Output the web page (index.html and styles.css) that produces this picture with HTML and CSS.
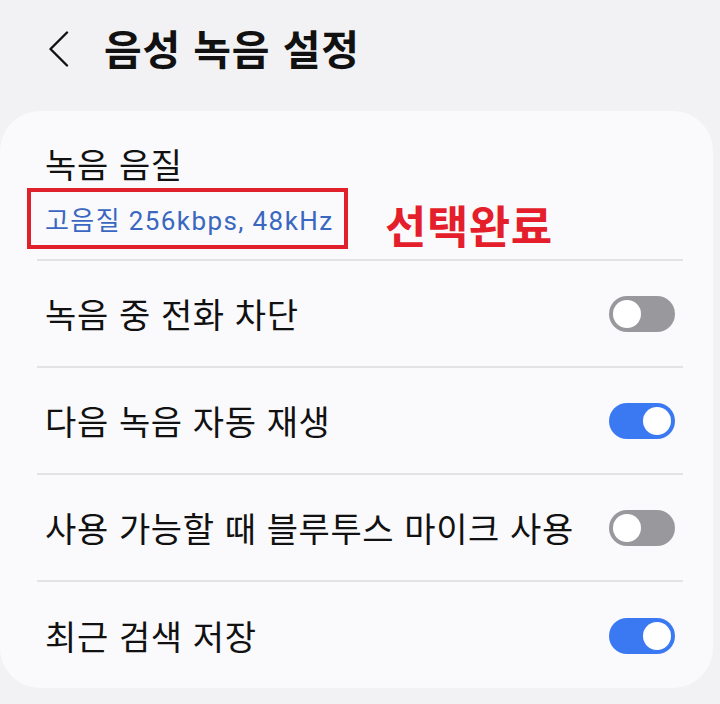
FILE: index.html
```html
<!DOCTYPE html>
<html lang="ko">
<head>
<meta charset="utf-8">
<link rel="stylesheet" href="styles.css">
</head>
<body>
<header class="topbar">
  <svg class="back" width="22" height="36" viewBox="0 0 22 36"><path d="M19 1.5 L2.5 18 L19 34.5" fill="none" stroke="#111" stroke-width="2.4" stroke-linecap="round" stroke-linejoin="round"/></svg>
  <h1 class="title">음성 녹음 설정</h1>
</header>
<main class="card">
  <ul class="list">
    <li class="row row-quality">
      <div class="label">녹음 음질</div>
      <div class="sub-line">
        <span class="sub-box">고음질 256kbps, 48kHz</span>
        <span class="note">선택완료</span>
      </div>
    </li>
    <li class="row">
      <span class="label">녹음 중 전화 차단</span>
      <span class="toggle"><span class="knob"></span></span>
    </li>
    <li class="row">
      <span class="label">다음 녹음 자동 재생</span>
      <span class="toggle on"><span class="knob"></span></span>
    </li>
    <li class="row">
      <span class="label">사용 가능할 때 블루투스 마이크 사용</span>
      <span class="toggle"><span class="knob"></span></span>
    </li>
    <li class="row last">
      <span class="label">최근 검색 저장</span>
      <span class="toggle on"><span class="knob"></span></span>
    </li>
  </ul>
</main>
</body>
</html>
```
FILE: styles.css
```css
* { box-sizing: border-box; }
html, body { margin: 0; padding: 0; }
body {
  background: #f2f2f4;
  font-family: "Noto Sans CJK KR", "Noto Sans", sans-serif;
  color: #111;
  width: 720px;
  height: 704px;
  overflow: hidden;
}
.topbar {
  height: 111px;
  display: flex;
  align-items: center;
  padding-left: 48px;
  padding-bottom: 16px;
}
.back { display: block; margin-top: 2px; }
.title {
  margin: 0 0 0 34px;
  font-size: 41px;
  font-weight: 700;
  letter-spacing: 0.8px;
  line-height: 1;
}
.card {
  width: 713px;
  height: 577px;
  background: #fafafc;
  border-radius: 40px;
}
.list {
  list-style: none;
  margin: 0;
  padding: 0 30px 0 37px;
}
.row {
  height: 107px;
  border-bottom: 2px solid #e3e3e5;
  display: flex;
  align-items: center;
  justify-content: space-between;
  padding: 0 8px;
}
.row.last { border-bottom: none; }
.row-quality {
  height: 150px;
  flex-direction: column;
  align-items: flex-start;
  justify-content: flex-start;
  padding-top: 33px;
}
.label {
  font-size: 34px;
  line-height: 40px;
  letter-spacing: 0.6px;
  color: #111;
  white-space: nowrap;
}
.sub-line {
  display: flex;
  align-items: center;
  margin-left: -18px;
  margin-top: 4px;
}
.sub-box {
  display: inline-flex;
  align-items: center;
  height: 61px;
  width: 321px;
  border: 4px solid #e0202b;
  padding: 0 6px 0 14px;
  font-family: "Roboto", "Noto Sans CJK KR", sans-serif;
  font-size: 26px;
  color: #3a67c0;
  letter-spacing: 1.4px;
  white-space: nowrap;
}
.note {
  margin-left: 37px;
  margin-top: 12px;
  font-size: 45px;
  font-weight: 700;
  color: #e41e2a;
  letter-spacing: 0.5px;
  line-height: 1;
}
.toggle {
  position: relative;
  width: 66px;
  height: 36px;
  border-radius: 18px;
  background: #99989d;
  flex: none;
}
.toggle .knob {
  position: absolute;
  top: 4px;
  left: 4px;
  width: 28px;
  height: 28px;
  border-radius: 50%;
  background: #fff;
}
.toggle.on { background: #3a79f1; }
.toggle.on .knob { left: 34px; }
```
